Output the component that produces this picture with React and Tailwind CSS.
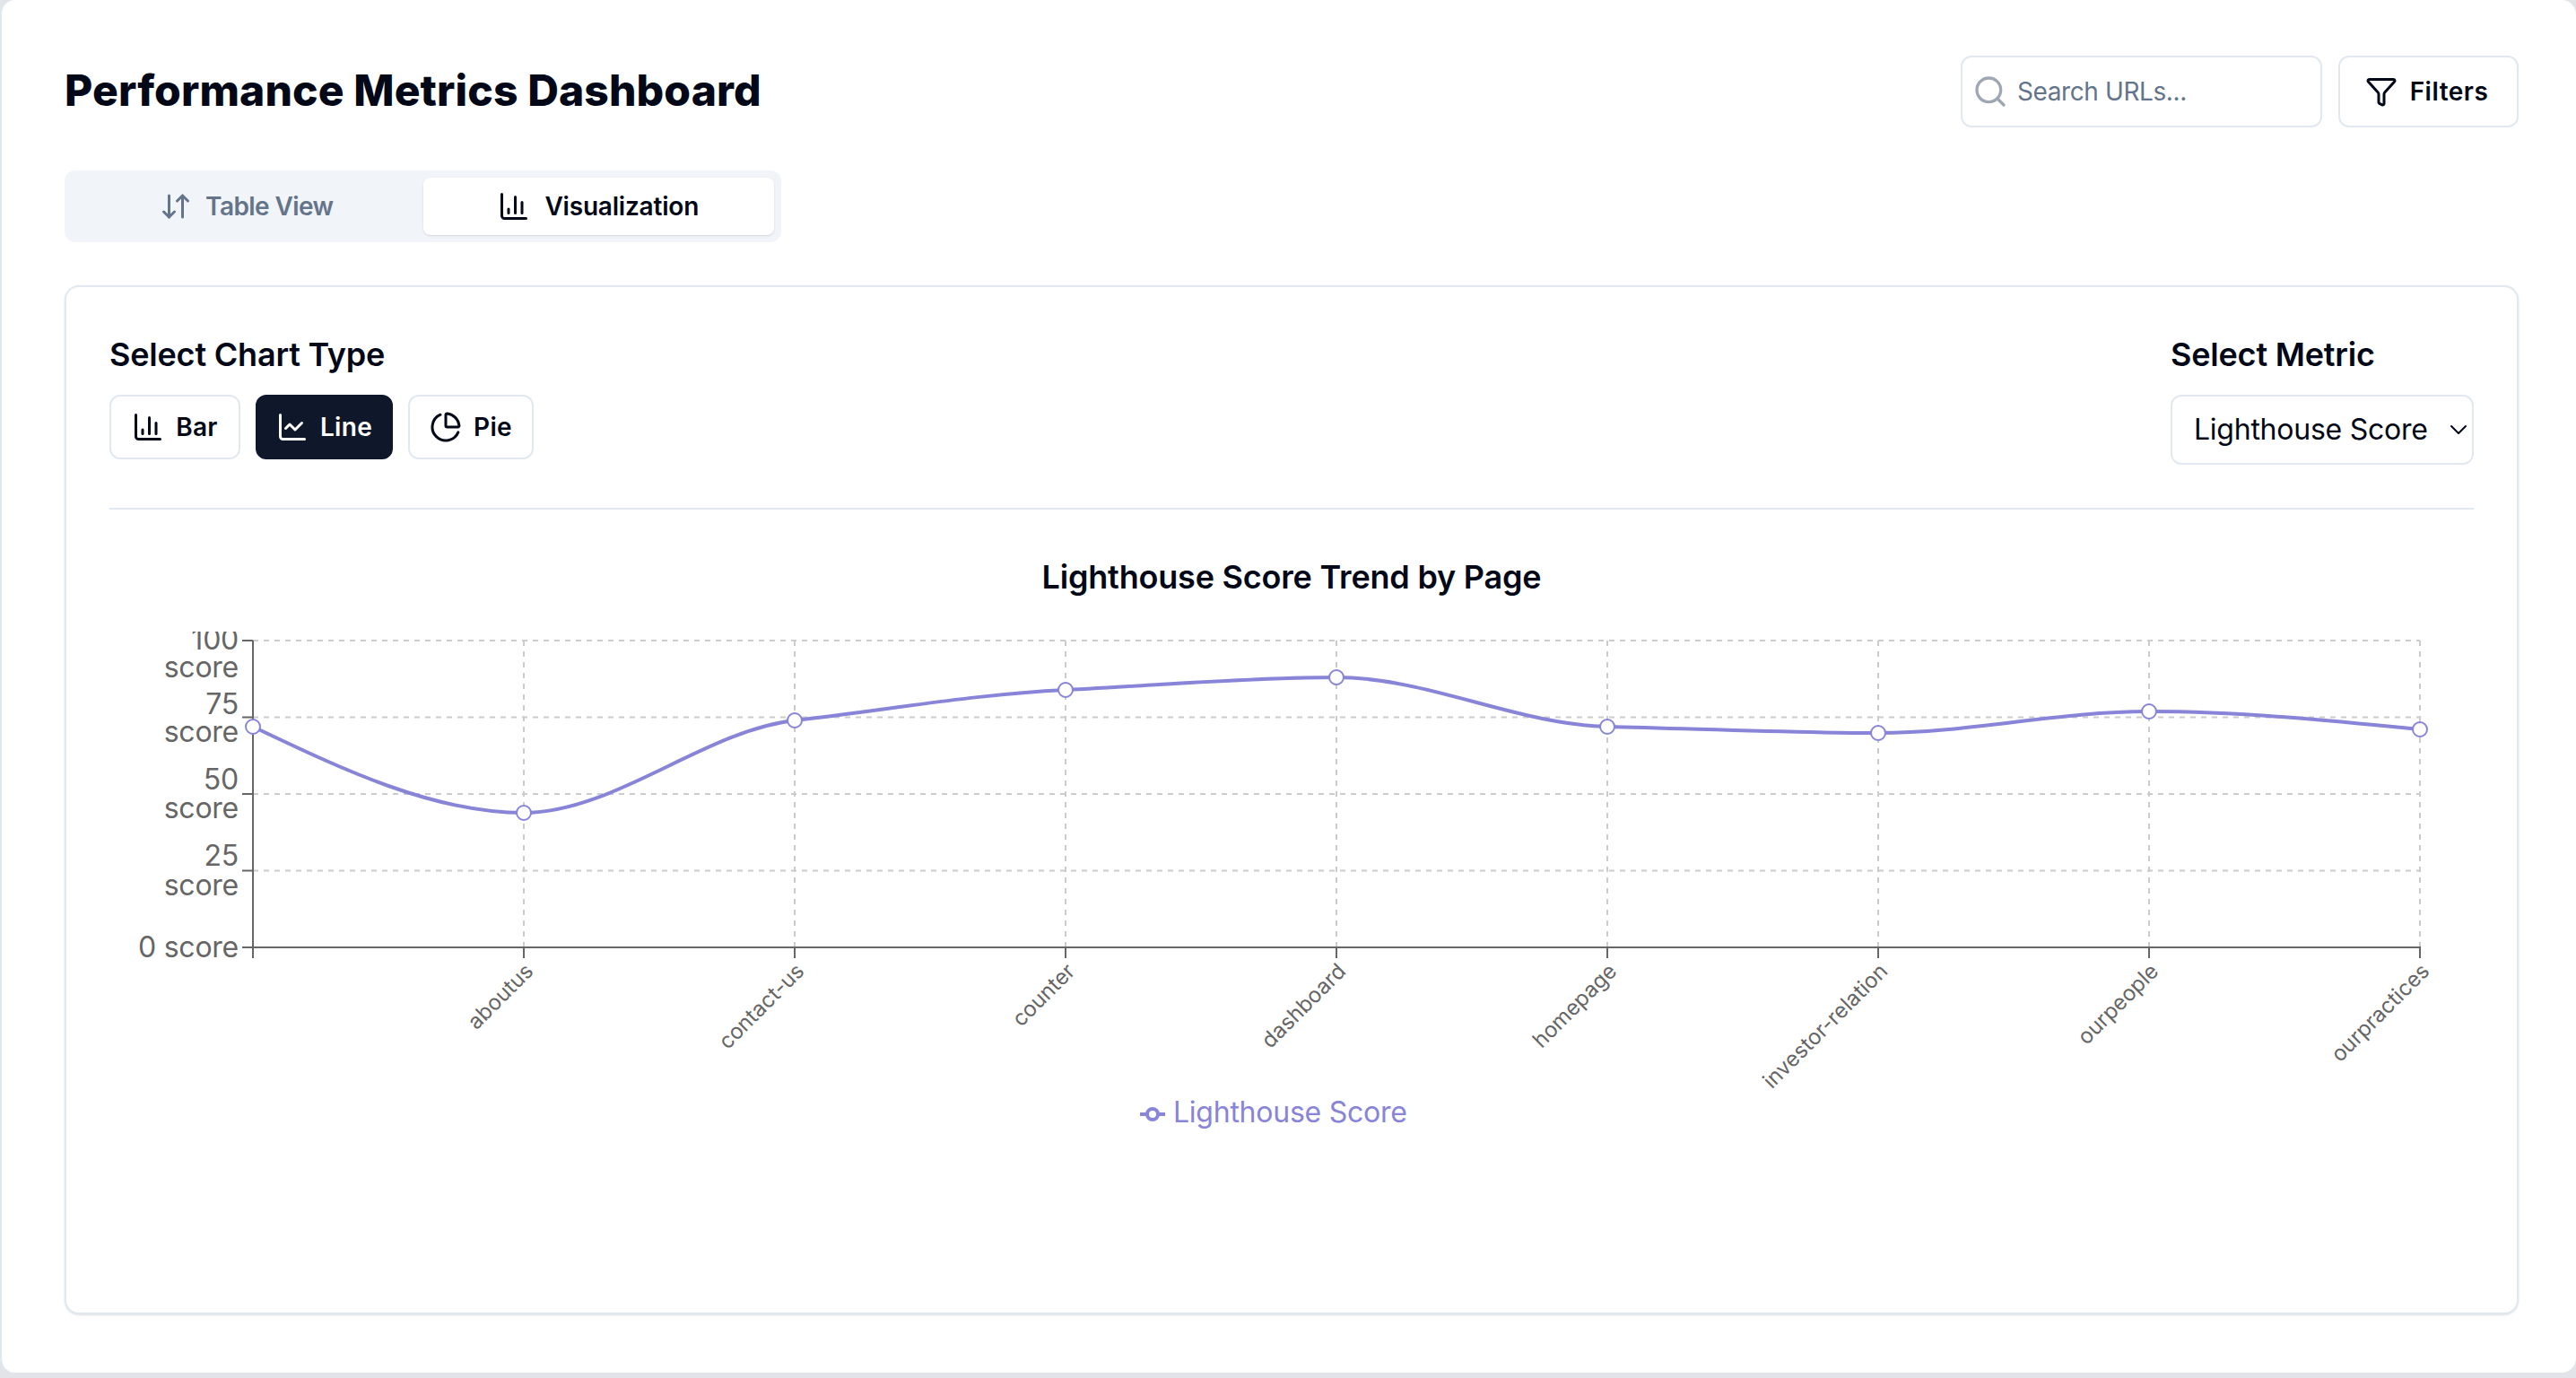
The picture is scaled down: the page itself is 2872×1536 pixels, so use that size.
import React from 'react';
import { ArrowDownUp, ChartColumn, ChartLine, ChartPie, ChevronDown, Funnel, Search } from 'lucide-react';

const TOPY = 714;
const BASEY = 1056;
const LEFTX = 282;
const STEPX = 302;
const pages = ['', 'aboutus', 'contact-us', 'counter', 'dashboard', 'homepage', 'investor-relation', 'ourpeople', 'ourpractices'];
const pointY = [810, 906, 803, 769, 755, 810, 817, 793, 813];
const points = pointY.map((y, i) => ({ x: LEFTX + i * STEPX, y }));
const yTicks = [
  { y: 714, top: '100', topBase: 724, scoreBase: 755 },
  { y: 799.5, top: '75', topBase: 796, scoreBase: 827 },
  { y: 885, top: '50', topBase: 880, scoreBase: 912 },
  { y: 970.5, top: '25', topBase: 965, scoreBase: 998 },
];

// monotone x curve, same as what the chart lib draws
const monotonePath = (pts) => {
  const n = pts.length;
  const d = [];
  for (let i = 0; i < n - 1; i++) d.push((pts[i + 1].y - pts[i].y) / (pts[i + 1].x - pts[i].x));
  const m = [d[0]];
  for (let i = 1; i < n - 1; i++) {
    const s = Math.sign(d[i - 1]) + Math.sign(d[i]);
    m.push(s === 0 ? 0 : (s / 2) * Math.min(Math.abs(d[i - 1]), Math.abs(d[i]), Math.abs(d[i - 1] + d[i]) / 2));
  }
  m[0] = (3 * d[0] - m[1]) / 2;
  m.push((3 * d[n - 2] - m[n - 2]) / 2);
  let path = `M${pts[0].x},${pts[0].y}`;
  for (let i = 0; i < n - 1; i++) {
    const h = (pts[i + 1].x - pts[i].x) / 3;
    path += `C${pts[i].x + h},${pts[i].y + m[i] * h},${pts[i + 1].x - h},${pts[i + 1].y - m[i + 1] * h},${pts[i + 1].x},${pts[i + 1].y}`;
  }
  return path;
};

const TypeButton = ({ icon: Icon, label, active, className }) => (
  <button className={`flex h-[72px] items-center justify-center gap-[13px] rounded-[12px] border-2 text-[28px] font-semibold tracking-[0.3px] ${className} ${active ? 'border-[#0f172a] bg-[#0f172a] text-white' : 'border-[#e2e8f0] bg-white text-[#020817]'}`}>
    <Icon size={36} strokeWidth={2} />
    {label}
  </button>
);

const LineChart = () => (
  <svg viewBox="122 704 2636 700" className="block h-[700px] w-[2636px]">
    {yTicks.map((t) => (
      <line key={t.y} x1={LEFTX} x2={2698} y1={t.y} y2={t.y} stroke="#ccc" strokeWidth="2" strokeDasharray="6 6" />
    ))}
    {points.slice(1).map((p) => (
      <line key={p.x} x1={p.x} x2={p.x} y1={TOPY} y2={BASEY} stroke="#ccc" strokeWidth="2" strokeDasharray="6 6" />
    ))}

    <line x1={LEFTX} x2={LEFTX} y1={TOPY} y2={BASEY} stroke="#666" strokeWidth="2" />
    <line x1={LEFTX} x2={2699} y1={BASEY} y2={BASEY} stroke="#666" strokeWidth="2" />
    {[...yTicks, { y: BASEY }].map((t) => (
      <line key={t.y} x1={270} x2={LEFTX} y1={t.y} y2={t.y} stroke="#666" strokeWidth="2" />
    ))}
    {points.map((p) => (
      <line key={p.x} x1={p.x} x2={p.x} y1={BASEY} y2={1068} stroke="#666" strokeWidth="2" />
    ))}

    <g fill="#666" fontSize="32" letterSpacing="-0.25" textAnchor="end">
      {yTicks.map((t) => (
        <text key={t.y} x={266}>
          <tspan x={266} y={t.topBase}>{t.top}</tspan>
          <tspan x={266} y={t.scoreBase}>score</tspan>
        </text>
      ))}
      <text x={266} y={1067}>0 score</text>
    </g>

    <g fill="#666" fontSize="24" textAnchor="end">
      {points.map((p, i) => (
        <text key={p.x} x={p.x + 12} y={1084} transform={`rotate(-45 ${p.x + 12} 1084)`}>{pages[i]}</text>
      ))}
    </g>

    <path d={monotonePath(points)} fill="none" stroke="#8884d8" strokeWidth="4" />
    {points.map((p) => (
      <circle key={p.x} cx={p.x} cy={p.y} r="8" fill="#fff" stroke="#8884d8" strokeWidth="2" />
    ))}

    <line x1={1271} x2={1299} y1={1242} y2={1242} stroke="#8884d8" strokeWidth="4" />
    <circle cx={1285} cy={1242} r="6" fill="#fff" stroke="#8884d8" strokeWidth="4" />
    <text x={1308} y={1251} fill="#8884d8" fontSize="32" letterSpacing="-0.25">Lighthouse Score</text>
  </svg>
);

export default function App() {
  return (
    <div className="h-[1536px] w-[2872px] overflow-hidden bg-[#e2e4e9] font-['Inter',sans-serif] text-[#020817]">
      <div className="h-[1530px] rounded-[16px] border-l-2 border-[#e2e8f0] bg-white pl-[70px] pr-[64px] pt-[62px]">
        <div className="flex h-[80px] items-center justify-between">
          <h1 className="-mt-[2px] text-[48px] font-extrabold tracking-[0.12px]">Performance Metrics Dashboard</h1>
          <div className="flex gap-[18px]">
            <div className="flex h-[80px] w-[403px] items-center gap-[10px] rounded-[12px] border-2 border-[#e2e8f0] pl-[11px]">
              <Search size={40} strokeWidth={2} className="text-[#a0a7b4]" />
              <span className="text-[28px] tracking-[-0.4px] text-[#64748b]">Search URLs...</span>
            </div>
            <button className="flex h-[80px] w-[201px] items-center justify-center gap-[14px] rounded-[12px] border-2 border-[#e2e8f0] pr-[4px] text-[28px] font-semibold tracking-[0.5px]">
              <Funnel size={36} strokeWidth={2} />
              Filters
            </button>
          </div>
        </div>

        <div className="mt-[48px] flex h-[80px] w-[799px] rounded-[12px] bg-[#f1f5f9] p-[8px]">
          <div className="flex w-[392px] items-center justify-center gap-[15px] rounded-[8px] pr-[2px] text-[28px] font-semibold tracking-[-0.6px] text-[#64748b]">
            <ArrowDownUp size={36} strokeWidth={2} />
            Table View
          </div>
          <div className="flex w-[392px] items-center justify-center gap-[16px] rounded-[8px] bg-white text-[28px] font-semibold tracking-[-0.2px] shadow-sm">
            <ChartColumn size={36} strokeWidth={2} />
            Visualization
          </div>
        </div>

        <div className="mt-[48px] h-[1147px] rounded-[16px] border-2 border-[#e2e8f0] bg-white px-[48px] pt-[48px] shadow-sm">
          <div className="flex items-start justify-between border-b-2 border-[#e2e8f0] pb-[48px]">
            <div>
              <h2 className="text-[36px] font-semibold leading-[54px] tracking-[-0.2px]">Select Chart Type</h2>
              <div className="mt-[18px] flex gap-[17px]">
                <TypeButton icon={ChartColumn} label="Bar" className="w-[146px]" />
                <TypeButton icon={ChartLine} label="Line" active className="w-[153px]" />
                <TypeButton icon={ChartPie} label="Pie" className="w-[140px]" />
              </div>
            </div>
            <div className="w-[338px]">
              <h2 className="text-[36px] font-semibold leading-[54px] tracking-[-0.2px]">Select Metric</h2>
              <div className="relative mt-[18px]">
                <select className="h-[78px] w-full appearance-none rounded-[12px] border-2 border-[#e2e8f0] bg-white pl-[24px] text-[32px] tracking-[-0.25px] outline-none">
                  <option>Lighthouse Score</option>
                </select>
                <ChevronDown size={32} strokeWidth={1.5} className="absolute right-[1px] top-[23px]" />
              </div>
            </div>
          </div>

          <h3 className="mt-[48px] text-center text-[36px] font-semibold leading-[54px] tracking-[-0.2px]">Lighthouse Score Trend by Page</h3>
          <div className="mt-[34px]">
            <LineChart />
          </div>
        </div>
      </div>
    </div>
  );
}
